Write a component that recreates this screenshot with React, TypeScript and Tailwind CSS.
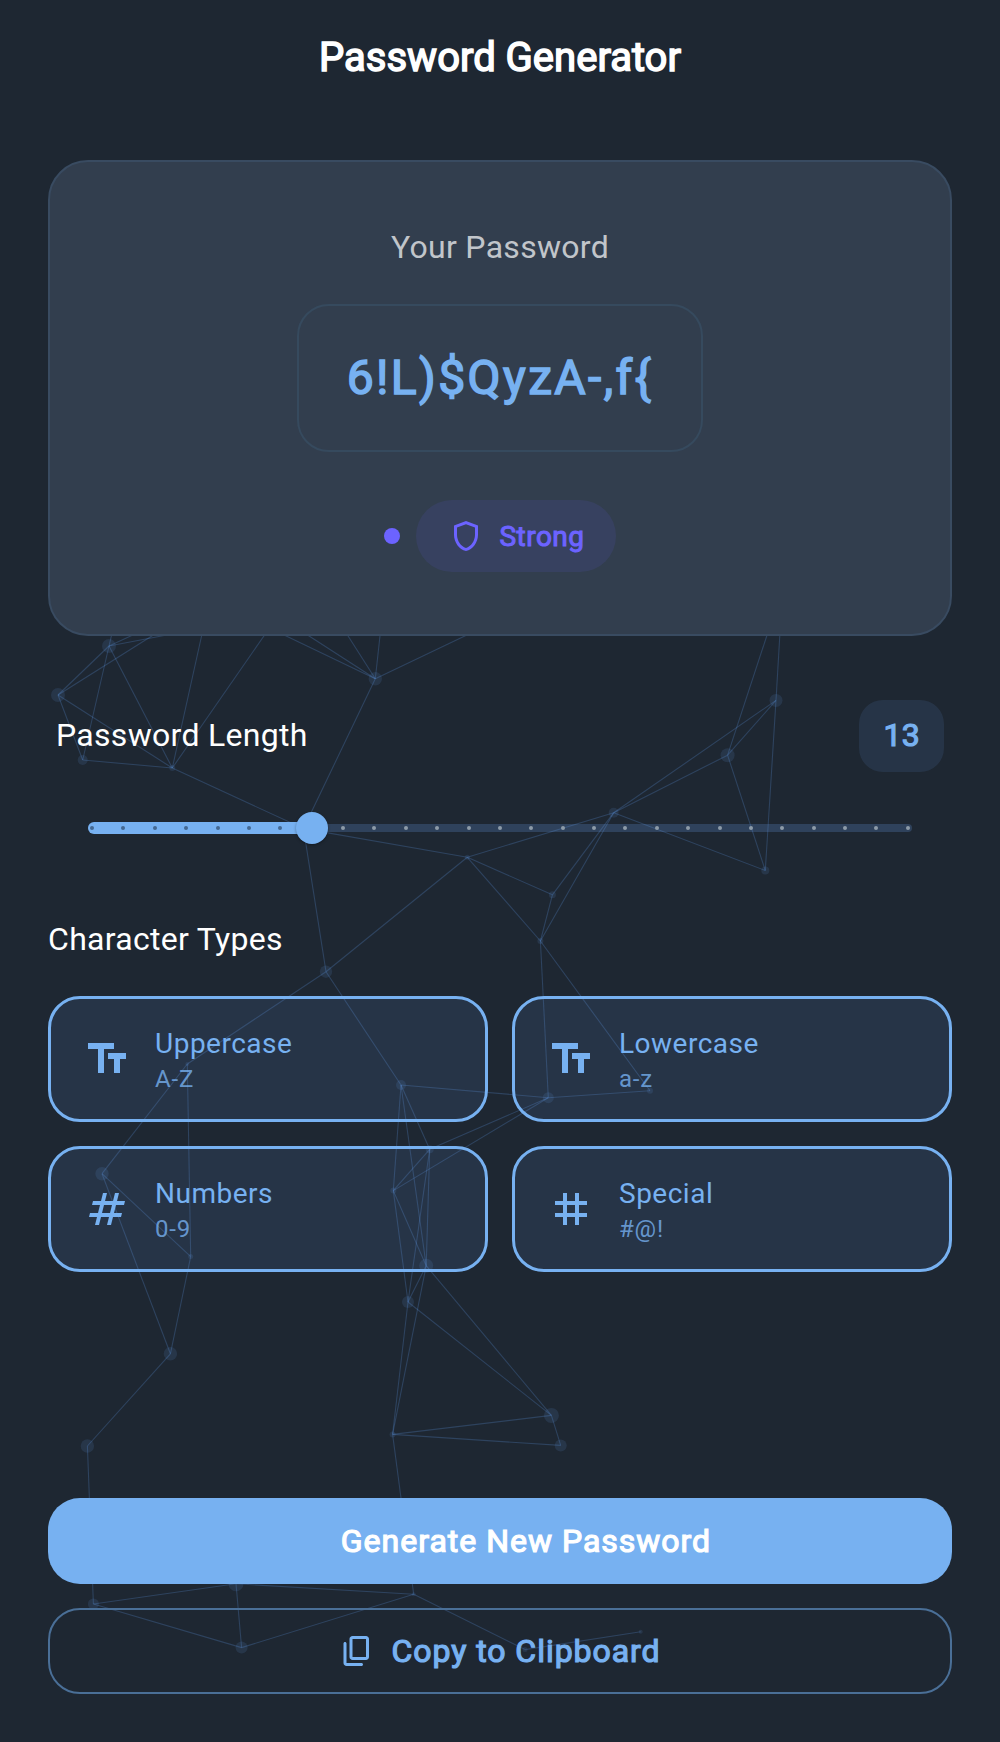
import React from "react";
import type { ReactNode } from "react";

type Point = [x: number, y: number, r: number];

const NODES: Record<string, Point> = {
  a: [109, 646, 7],
  b: [58, 695, 7],
  c: [82.7, 760, 5],
  d: [172.3, 768, 3],
  e: [375.3, 678.7, 6.7],
  f: [303.5, 828.6, 4],
  g: [467.3, 857.3, 2.5],
  h: [613.7, 812.7, 5],
  i: [727.6, 755.2, 7],
  j: [776, 700.4, 6.5],
  k: [765.3, 870.5, 4],
  l: [552.4, 894.8, 3.5],
  m: [540.4, 941, 3],
  n: [326, 971.7, 6.2],
  o: [187.3, 1064, 2],
  p: [401, 1085, 5],
  q: [548.3, 1097.7, 5.5],
  r: [650, 1090.7, 3],
  s: [102, 1173.7, 6.7],
  t: [190.7, 1256.6, 2.5],
  u: [170.4, 1353.8, 6.7],
  v: [429.7, 1149.3, 4],
  w: [393.3, 1190.6, 3],
  x: [426.2, 1265.7, 7],
  y: [408, 1302, 6],
  z: [551.4, 1415.4, 7.5],
  aa: [560.7, 1445.4, 6],
  ab: [87.4, 1446, 6.7],
  ac: [392.6, 1434.4, 3],
  ad: [236, 1583.8, 7.5],
  ae: [93.4, 1604, 5.5],
  af: [413.7, 1594.2, 2],
  ag: [241.6, 1647.6, 6],
  ah: [525, 1649.6, 2.5],
  ai: [640.7, 1631.7, 2],
};

const LINKS =
  "a-b a-c a-d b-c b-d c-d d-f e-f f-g f-n g-h g-l g-m g-n h-i h-j h-k h-l h-m i-j i-k j-k l-m m-q m-r n-o n-p o-s o-t p-q p-v p-w p-x q-v q-w q-r v-w v-x v-y w-x w-y x-y x-z x-ac y-z y-ac z-ac z-aa aa-ac s-t s-u t-u u-ab ab-ae ac-af ad-ae ad-ag ad-af ae-ag ag-af af-ah ah-ai"
    .split(" ")
    .map((pair) => pair.split("-"));

/* Links that run upwards and disappear behind the password card. */
const HIDDEN_LINKS: [string, number, number][] = [
  ["a", 111.8, 634],
  ["a", 135, 634],
  ["a", 172, 634],
  ["b", 155, 634],
  ["d", 202, 634],
  ["d", 265.3, 634],
  ["e", 282, 634],
  ["e", 306, 634],
  ["e", 346.8, 634],
  ["e", 380.2, 634],
  ["e", 469, 634],
  ["i", 767.4, 634],
  ["j", 779.9, 634],
];

function Network() {
  return (
    <svg className="pointer-events-none absolute inset-0" width="1000" height="1742" viewBox="0 0 1000 1742" fill="none" aria-hidden="true">
      <g fill="#6ca6f3" fillOpacity="0.12">
        {Object.entries(NODES).map(([id, [x, y, r]]) => (
          <circle key={id} cx={x} cy={y} r={r} />
        ))}
      </g>
      <g stroke="#659ff0" strokeOpacity="0.23" strokeWidth="1.1">
        {LINKS.map(([from, to]) => (
          <line key={from + to} x1={NODES[from][0]} y1={NODES[from][1]} x2={NODES[to][0]} y2={NODES[to][1]} />
        ))}
        {HIDDEN_LINKS.map(([from, x, y]) => (
          <line key={from + x} x1={NODES[from][0]} y1={NODES[from][1]} x2={x} y2={y} />
        ))}
      </g>
    </svg>
  );
}

function Icon({ d, className }: { d: string; className: string }) {
  return (
    <svg viewBox="0 0 24 24" fill="currentColor" className={className} aria-hidden="true">
      <path d={d} />
    </svg>
  );
}

const TEXT_FIELDS = "M2.5 4v3h5v12h3V7h5V4h-13zm19 5h-9v3h3v7h3v-7h3V9z";
const NUMBERS = "M20.5 10 21 8h-4l1-4h-2l-1 4h-4l1-4h-2L9 8H5l-.5 2h4l-1 4h-4L3 16h4l-1 4h2l1-4h4l-1 4h2l1-4h4l.5-2h-4l1-4h4zm-7 4h-4l1-4h4l-1 4z";
const TAG = "M20 10V8h-4V4h-2v4h-4V4H8v4H4v2h4v4H4v2h4v4h2v-4h4v4h2v-4h4v-2h-4v-4h4zm-6 4h-4v-4h4v4z";
const SHIELD = "M12 2 4 5v6.09c0 5.05 3.41 9.76 8 10.91 4.59-1.15 8-5.86 8-10.91V5l-8-3zm6 9.09c0 4-2.55 7.7-6 8.83-3.45-1.13-6-4.82-6-8.83v-4.7l6-2.25 6 2.25v4.7z";
const COPY = "M15 20H5V7c0-.55-.45-1-1-1s-1 .45-1 1v13c0 1.1.9 2 2 2h10c.55 0 1-.45 1-1s-.45-1-1-1zm5-4V4c0-1.1-.9-2-2-2H9c-1.1 0-2 .9-2 2v12c0 1.1.9 2 2 2h9c1.1 0 2-.9 2-2zm-2 0H9V4h9v12z";

function TypeTile({ icon, label, sample }: { icon: string; label: string; sample: string }) {
  return (
    <button className="flex h-[126px] items-center gap-6 rounded-[32px] border-3 border-[#77b1f1] bg-[#6ea2f3]/11 px-8 text-left text-[#77b1f1]">
      <Icon d={icon} className="size-12" />
      <span className="flex flex-col">
        <span className="pt-0.5 text-[28px] leading-[38px] tracking-[0.5px]">{label}</span>
        <span className="text-[24px] leading-[32px] tracking-[0.8px] text-[#77b1f1]/80">{sample}</span>
      </span>
    </button>
  );
}

const MIN = 6;
const MAX = 32;

function LengthSlider({ value }: { value: number }) {
  const position = 4 + ((value - MIN) / (MAX - MIN)) * 816;
  const steps = Array.from({ length: MAX - MIN + 1 }, (_, i) => MIN + i);
  return (
    <div className="relative mx-10 mt-2 grid h-24 items-center">
      <div className="col-start-1 row-start-1 h-2 rounded-full bg-[#6ca6f3]/22" />
      <div className="col-start-1 row-start-1 h-3 rounded-l-full bg-[#77b1f1]" style={{ width: position }} />
      <div className="col-start-1 row-start-1 flex justify-between px-0.5">
        {steps.map((step) => (
          <span key={step} className={step < value ? "size-1 rounded-full bg-[#446892]" : "size-1 rounded-full bg-[#8d9ba8]"} />
        ))}
      </div>
      <div className="col-start-1 row-start-1 size-8 rounded-full bg-[#77b1f1] shadow-[0_1px_3px_rgba(0,0,0,0.35)]" style={{ marginLeft: position - 16 }} />
    </div>
  );
}

function Heading({ children }: { children: ReactNode }) {
  return <h2 className="mt-[41px] text-[32px] leading-[44px] tracking-[0.3px] text-white">{children}</h2>;
}

export default function App() {
  return (
    <div className="relative h-[1742px] w-[1000px] overflow-hidden bg-[#1e2732] font-['Roboto',sans-serif] font-normal">
      <Network />
      <main className="relative flex h-full flex-col px-12 pb-12">
        <header className="flex h-[115px] items-center justify-center">
          <h1 className="text-[40px] leading-[47px] text-white [-webkit-text-stroke:1.5px_#fff]">Password Generator</h1>
        </header>

        <section className="mt-[45px] flex h-[476px] flex-col items-center rounded-[40px] border-2 border-[#394b61] bg-[#323e4e] pt-16">
          <p className="text-[32px] leading-[42px] tracking-[0.3px] text-[#c1c5ca]">Your Password</p>
          <div className="mt-9 flex h-[148px] items-center rounded-[32px] border-2 border-[#364a5e] px-12">
            <span className="text-[48px] leading-[64px] tracking-[2.4px] text-[#77b1f1] [-webkit-text-stroke:1.5px_#77b1f1]">{"6!L)$QyzA-,f{"}</span>
          </div>
          <div className="mt-12 flex items-center gap-4">
            <span className="size-4 rounded-full bg-[#6c63ff]" />
            <div className="flex h-[72px] items-center gap-4 rounded-full bg-[#6c63ff]/10 px-8 text-[#6c63ff]">
              <Icon d={SHIELD} className="size-9" />
              <span className="pt-0.5 text-[28px] leading-[40px] tracking-[0.47px] [-webkit-text-stroke:1px_#6c63ff]">Strong</span>
            </div>
          </div>
        </section>

        <div className="mt-16 flex items-center justify-between px-2">
          <span className="pb-0.5 text-[32px] leading-[44px] tracking-[0.3px] text-white">Password Length</span>
          <span className="h-[72px] rounded-3xl bg-[#6ea2f3]/11 px-6 text-[32px] leading-[70px] tracking-[0.3px] text-[#77b1f1] [-webkit-text-stroke:1.2px_#77b1f1]">13</span>
        </div>
        <LengthSlider value={13} />

        <Heading>Character Types</Heading>
        <div className="mt-[35px] grid grid-cols-2 gap-6">
          <TypeTile icon={TEXT_FIELDS} label="Uppercase" sample="A-Z" />
          <TypeTile icon={TEXT_FIELDS} label="Lowercase" sample="a-z" />
          <TypeTile icon={NUMBERS} label="Numbers" sample="0-9" />
          <TypeTile icon={TAG} label="Special" sample="#@!" />
        </div>

        <div className="mt-auto flex flex-col gap-6 text-[32px] leading-[44px]">
          <button className="flex h-[86px] items-center justify-center gap-4 rounded-[32px] bg-[#77b1f1] tracking-[0.99px] text-white">
            <span className="size-9" />
            <span className="[-webkit-text-stroke:1.2px_#fff]">Generate New Password</span>
          </button>
          <button className="flex h-[86px] items-center justify-center gap-4 rounded-[32px] border-2 border-[#4a6f97] tracking-[0.96px] text-[#77b1f1]">
            <Icon d={COPY} className="size-9" />
            <span className="[-webkit-text-stroke:1.2px_#77b1f1]">Copy to Clipboard</span>
          </button>
        </div>
      </main>
    </div>
  );
}
